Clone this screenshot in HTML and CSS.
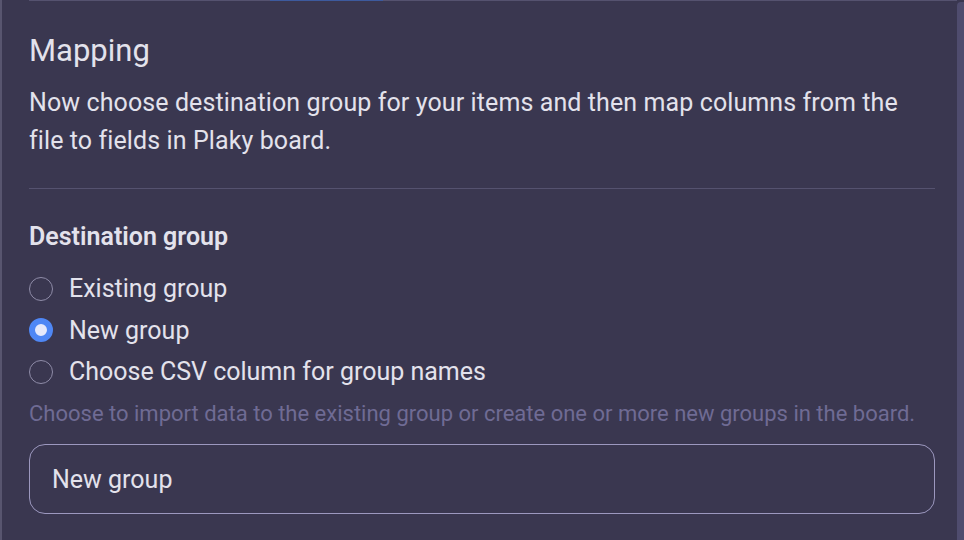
FILE: index.html
```html
<!DOCTYPE html>
<html lang="en">
<head>
  <meta charset="UTF-8" />
  <meta name="viewport" content="width=device-width, initial-scale=1.0"/>
  <title>Import - Mapping</title>
  <link rel="stylesheet" href="styles.css">
</head>
<body>
  <div class="panel">
    <div class="content">
      <div class="tabs">
        <span class="tab-active"></span>
      </div>

      <h2 class="title">Mapping</h2>
      <p class="intro">Now choose destination group for your items and then map columns from the file to fields in Plaky board.</p>

      <hr class="divider">

      <h3 class="section-title">Destination group</h3>

      <div class="radio-list">
        <label class="radio">
          <span class="radio-dot"></span>
          Existing group
        </label>
        <label class="radio checked">
          <span class="radio-dot"></span>
          New group
        </label>
        <label class="radio">
          <span class="radio-dot"></span>
          Choose CSV column for group names
        </label>
      </div>

      <p class="hint">Choose to import data to the existing group or create one or more new groups in the board.</p>

      <div class="field">New group</div>
    </div>
    <div class="scrollbar"></div>
  </div>
</body>
</html>
```

FILE: styles.css
```css
html, body {
  margin: 0;
  height: 100%;
}

body {
  font-family: Roboto, 'Liberation Sans', sans-serif;
  background-color: #3a3750;
  color: #e3e2ec;
  overflow: hidden;
}

.panel {
  display: flex;
  height: 540px;
  border-left: 2px solid #58556f;
}

.content {
  flex: 1;
  padding: 0 0 0 27px;
}

.scrollbar {
  width: 7px;
  background-color: #4f4c6e;
  border-top-left-radius: 4px;
  margin-top: 2px;
}

.tabs {
  height: 2px;
  border-top: 1px solid #55526f;
  position: relative;
}

.tab-active {
  position: absolute;
  left: 241px;
  top: -2px;
  width: 113px;
  height: 2px;
  background-color: #3d5a9e;
}

.content > *:not(.tabs) {
  margin-right: 22px;
}

.title {
  font-size: 31px;
  font-weight: 400;
  margin: 30px 0 0;
  line-height: 36px;
}

.intro {
  font-size: 25px;
  line-height: 38px;
  letter-spacing: 0.1px;
  margin: 15px 0 0;
}

.divider {
  border: none;
  border-top: 1px solid #55526f;
  margin: 28px 0 0;
}

.section-title {
  font-size: 25px;
  font-weight: 600;
  margin: 33px 0 0;
  line-height: 30px;
}

.radio-list {
  display: flex;
  flex-direction: column;
  gap: 12.5px;
  margin-top: 22px;
}

.radio {
  display: flex;
  align-items: center;
  gap: 16px;
  font-size: 25px;
  line-height: 29px;
}

.radio-dot {
  width: 24px;
  height: 24px;
  border: 1.5px solid #8f8ca8;
  border-radius: 50%;
  box-sizing: border-box;
}

.radio.checked .radio-dot {
  border: 6.5px solid #4f87f5;
  background-color: #e6e9fb;
}

.hint {
  font-size: 22px;
  color: #6f6b94;
  margin: 13.5px 0 0;
  line-height: 28px;
}

.field {
  margin-top: 16.5px;
  height: 70px;
  border: 1px solid #9c98bf;
  border-radius: 16px;
  box-sizing: border-box;
  padding: 0 22px;
  display: flex;
  align-items: center;
  font-size: 25px;
}
```
